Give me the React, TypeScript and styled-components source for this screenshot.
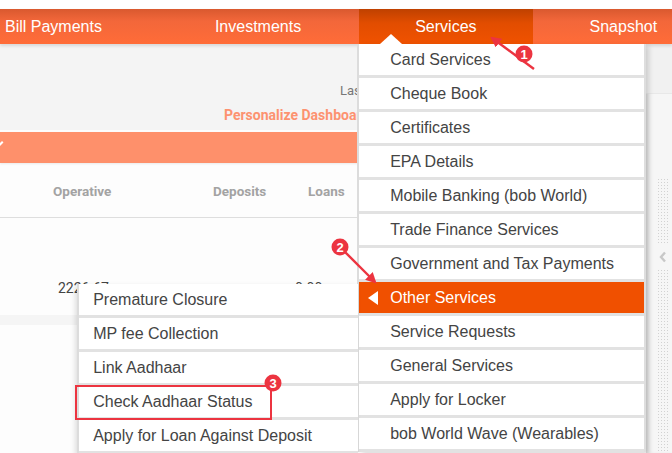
import React from 'react'
import styled, { createGlobalStyle, css } from 'styled-components'

const GlobalStyle = createGlobalStyle`
  html, body {
    margin: 0;
    padding: 0;
    background: #ffffff;
  }
  body {
    font-family: 'Liberation Sans', Arial, sans-serif;
  }
`

const Page = styled.div`
  position: relative;
  width: 672px;
  height: 453px;
  overflow: hidden;
  background: #ffffff;
`

const TopStrip = styled.div`
  height: 9px;
  background: #ffffff;
`

const NavBar = styled.nav`
  position: relative;
  z-index: 5;
  display: flex;
  height: 35px;
  background: linear-gradient(180deg, #d9592f 0%, #f3673a 35%, #ff6c38 100%);
  box-shadow: 0 2px 3px rgba(0, 0, 0, 0.12);
`

const NavTrack = styled.div`
  display: flex;
  margin-left: -52px;
`

const NavTab = styled.div<{ $active?: boolean }>`
  position: relative;
  display: flex;
  align-items: center;
  padding: 0 56px 0 57px;
  color: #ffffff;
  font-size: 16px;
  white-space: nowrap;
  ${(p) =>
    p.$active &&
    css`
      margin-left: 2px;
      padding-left: 56px;
      background: linear-gradient(180deg, #bf4100 0%, #e24d00 40%, #f05200 100%);
    `}
`

const Body = styled.div`
  display: flex;
  height: 409px;
`

const Main = styled.div`
  flex: 0 0 646px;
  display: flex;
  flex-direction: column;
  background: #fdfdfd;
`

const InfoPanel = styled.div`
  flex-shrink: 0;
  height: 86px;
  display: flex;
  flex-direction: column;
  padding-top: 37px;
  box-sizing: border-box;
  background: #f4f4f4;
`

const Clip = styled.div<{ $left: number; $w: number }>`
  margin-left: ${(p) => p.$left}px;
  width: ${(p) => p.$w}px;
  overflow: hidden;
  white-space: nowrap;
`

const LastLogin = styled.span`
  color: #777777;
  font-family: Roboto, 'Liberation Sans', sans-serif;
  font-size: 13px;
`

const Personalize = styled.span`
  display: block;
  margin-top: 8px;
  color: #fd9270;
  font-family: Roboto, 'Liberation Sans', sans-serif;
  font-weight: 700;
  font-size: 14px;
`

const SummaryBar = styled.div`
  position: relative;
  flex-shrink: 0;
  height: 31px;
  margin-top: 2px;
  background: #fe906b;
  box-shadow: 0 1px 2px rgba(0, 0, 0, 0.08);
`

const BarChevron = styled.span`
  position: absolute;
  left: -5px;
  top: 7px;
  width: 5px;
  height: 5px;
  border-right: 2px solid #ffffff;
  border-bottom: 2px solid #ffffff;
  transform: rotate(45deg);
`

const TableHead = styled.div`
  flex-shrink: 0;
  display: flex;
  align-items: center;
  height: 53px;
  margin-top: 1px;
  border-bottom: 1px solid #dedede;
  background: #fdfdfd;
`

const HeadCell = styled.div<{ $w: number; $pad?: number }>`
  flex: 0 0 ${(p) => p.$w}px;
  padding-left: ${(p) => p.$pad ?? 0}px;
  color: #a3a3a3;
  font-family: Roboto, 'Liberation Sans', sans-serif;
  font-weight: 700;
  font-size: 13.5px;
`

const TableRow = styled.div`
  flex-shrink: 0;
  display: flex;
  align-items: center;
  height: 97px;
  padding-top: 42px;
  box-sizing: border-box;
  background: #fdfdfd;
`

const Cell = styled.div<{ $w: number; $pad?: number }>`
  flex: 0 0 ${(p) => p.$w}px;
  padding-left: ${(p) => p.$pad ?? 0}px;
  overflow: hidden;
  white-space: nowrap;
  color: #444444;
  font-family: Roboto, 'Liberation Sans', sans-serif;
  font-size: 14px;
`

const Band = styled.div`
  flex-shrink: 0;
  height: 10px;
  background: #f5f5f5;
`

const Rail = styled.aside`
  position: relative;
  flex: 1;
  display: flex;
  flex-direction: column;
  overflow: hidden;
  background: #f6f6f6;
  box-shadow: inset 4px 0 4px -2px rgba(0, 0, 0, 0.12);
`

const RailTop = styled.div`
  flex-shrink: 0;
  height: 49px;
  background: #f1f1f1;
  border-bottom: 1px solid #e8e8e8;
`

const RailGap = styled.div`
  flex-shrink: 0;
  height: 84px;
`

const RailDots = styled.div<{ $h: number }>`
  flex-shrink: 0;
  width: 12px;
  height: ${(p) => p.$h}px;
  margin-left: 11px;
  background-image: radial-gradient(circle, #d2d2d2 0.8px, transparent 1px);
  background-size: 3px 3px;
`

const RailHandle = styled.div`
  flex-shrink: 0;
  display: flex;
  justify-content: center;
  width: 12px;
  margin: 6px 0 6px 11px;
`

const Menu = styled.ul`
  position: absolute;
  top: 100%;
  left: 0;
  width: 287px;
  margin: 0;
  padding: 0;
  list-style: none;
  background: #e2e2e2;
  border-right: 2px solid #dedede;
  box-sizing: border-box;
  box-shadow: -2px 0 0 #dcdcdc, 3px 2px 5px rgba(0, 0, 0, 0.15);
  z-index: 10;

  &::before {
    content: '';
    position: absolute;
    top: -10px;
    left: 21px;
    border-left: 11px solid transparent;
    border-right: 11px solid transparent;
    border-bottom: 10px solid #ffffff;
  }
`

const MenuItem = styled.li<{ $active?: boolean }>`
  position: relative;
  display: flex;
  align-items: center;
  height: 31px;
  margin-bottom: 3px;
  padding-top: 1px;
  padding-left: 31px;
  box-sizing: border-box;
  background: ${(p) => (p.$active ? '#f05000' : '#ffffff')};
  color: ${(p) => (p.$active ? '#ffffff' : '#444444')};
  font-size: 16px;
  white-space: nowrap;
`

const LeftCaret = styled.span`
  position: absolute;
  left: 9px;
  top: 9px;
  border-top: 7px solid transparent;
  border-bottom: 7px solid transparent;
  border-right: 10px solid #ffffff;
`

const SubMenu = styled.ul`
  position: absolute;
  top: 2px;
  right: 100%;
  width: 281px;
  margin: 0 1px 0 0;
  padding: 0;
  list-style: none;
  background: #e2e2e2;
  border-left: 2px solid #dcdcdc;
  box-sizing: border-box;
  box-shadow: -2px 2px 5px rgba(0, 0, 0, 0.12);
`

const SubItem = styled.li`
  display: flex;
  align-items: center;
  height: 31px;
  margin-bottom: 3px;
  padding-left: 14px;
  background: #ffffff;
  color: #444444;
  font-size: 16px;
  white-space: nowrap;
`

const Annotations = styled.svg`
  position: absolute;
  inset: 0;
  pointer-events: none;
  z-index: 20;
`

const services = [
  'Card Services',
  'Cheque Book',
  'Certificates',
  'EPA Details',
  'Mobile Banking (bob World)',
  'Trade Finance Services',
  'Government and Tax Payments',
  'Other Services',
  'Service Requests',
  'General Services',
  'Apply for Locker',
  'bob World Wave (Wearables)',
]

const otherServices = [
  'Premature Closure',
  'MP fee Collection',
  'Link Aadhaar',
  'Check Aadhaar Status',
  'Apply for Loan Against Deposit',
]

const RED = '#ec3440'

const Badge = ({ x, y, n }: { x: number; y: number; n: string }) => (
  <g>
    <circle cx={x} cy={y} r={8.5} fill={RED} />
    <text
      x={x}
      y={y + 4.5}
      textAnchor="middle"
      fill="#ffffff"
      fontFamily="'Liberation Sans', Arial, sans-serif"
      fontWeight={700}
      fontSize={13}
    >
      {n}
    </text>
  </g>
)

const App = () => {
  return (
    <>
      <GlobalStyle />
      <Page>
        <TopStrip />
        <NavBar>
          <NavTrack>
            <NavTab>Bill Payments</NavTab>
            <NavTab>Investments</NavTab>
            <NavTab $active>
              Services
              <Menu>
                {services.map((s) => (
                  <MenuItem key={s} $active={s === 'Other Services'}>
                    {s === 'Other Services' && (
                      <>
                        <LeftCaret />
                        <SubMenu>
                          {otherServices.map((o) => (
                            <SubItem key={o}>{o}</SubItem>
                          ))}
                        </SubMenu>
                      </>
                    )}
                    {s}
                  </MenuItem>
                ))}
              </Menu>
            </NavTab>
            <NavTab>Snapshot</NavTab>
          </NavTrack>
        </NavBar>
        <Body>
          <Main>
            <InfoPanel>
              <Clip $left={340} $w={18}>
                <LastLogin>Last Login : 12-03-2024 10:42:18</LastLogin>
              </Clip>
              <Clip $left={224} $w={134}>
                <Personalize>Personalize Dashboard</Personalize>
              </Clip>
            </InfoPanel>
            <SummaryBar>
              <BarChevron />
            </SummaryBar>
            <TableHead>
              <HeadCell $w={160} $pad={53}>Operative</HeadCell>
              <HeadCell $w={95}>Deposits</HeadCell>
              <HeadCell $w={80}>Loans</HeadCell>
            </TableHead>
            <TableRow>
              <Cell $w={77} $pad={58}>2226.67</Cell>
              <Cell $w={80} $pad={160}>0.00</Cell>
            </TableRow>
            <Band />
          </Main>
          <Rail>
            <RailTop />
            <RailGap />
            <RailDots $h={67} />
            <RailHandle>
              <svg width="8" height="12" viewBox="0 0 8 12">
                <polyline points="6,1.5 2,6 6,10.5" fill="none" stroke="#c8c8c8" strokeWidth="2.4" />
              </svg>
            </RailHandle>
            <RailDots $h={200} />
          </Rail>
        </Body>
        <Annotations width="672" height="453" viewBox="0 0 672 453">
          <defs>
            <marker id="head" viewBox="0 0 10 10" refX="8" refY="5" markerWidth="4.5" markerHeight="4.5" orient="auto-start-reverse">
              <path d="M0,0 L10,5 L0,10 z" fill={RED} />
            </marker>
          </defs>
          <line x1="534" y1="69" x2="492" y2="38" stroke={RED} strokeWidth="2.4" markerEnd="url(#head)" />
          <Badge x={524} y={54} n="1" />
          <line x1="340" y1="247" x2="375" y2="282" stroke={RED} strokeWidth="2.4" markerEnd="url(#head)" />
          <Badge x={340} y={247} n="2" />
          <rect x="76" y="386" width="195" height="33" fill="none" stroke={RED} strokeWidth="2" />
          <Badge x={273} y={383} n="3" />
        </Annotations>
      </Page>
    </>
  )
}

export default App
